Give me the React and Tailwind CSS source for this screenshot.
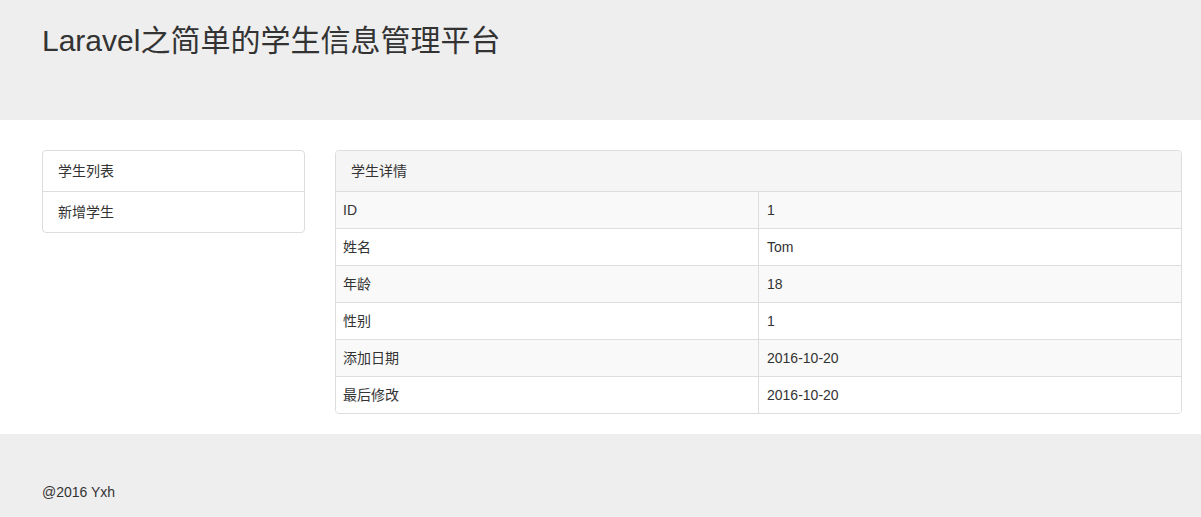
import React from 'react';

const FONT = {fontFamily: '"Liberation Sans", "Noto Sans CJK SC", sans-serif'};

const rows = [
    ['ID', '1'],
    ['姓名', 'Tom'],
    ['年龄', '18'],
    ['性别', '1'],
    ['添加日期', '2016-10-20'],
    ['最后修改', '2016-10-20'],
];

function Sidebar() {
    return <div className="w-[263px] flex-none rounded-[4px] border border-[#ddd] bg-white">
        <div className="px-[15px] py-[10px] leading-[20px] border-b border-[#ddd]">学生列表</div>
        <div className="px-[15px] py-[10px] leading-[20px]">新增学生</div>
    </div>;
}

function DetailPanel() {
    return <div className="w-[847px] flex-none rounded-[4px] border border-[#ddd] bg-white overflow-hidden">
        <div className="px-[15px] py-[10px] leading-[20px] bg-[#f5f5f5] border-b border-[#ddd]">学生详情</div>
        <table className="w-full border-collapse table-fixed">
            <tbody>
            {
                rows.map(([label, value], i) => <tr key={label} className={(i % 2 === 0 ? 'bg-[#f9f9f9]' : 'bg-white') + (i < rows.length - 1 ? ' border-b border-[#ddd]' : '')}>
                    <td className="px-[7px] py-[8px] leading-[20px] border-r border-[#ddd] text-left align-top">{label}</td>
                    <td className="px-[8px] py-[8px] leading-[20px] text-left align-top">{value}</td>
                </tr>)
            }
            </tbody>
        </table>
    </div>;
}

export default function App() {
    return <div className="w-[1201px] min-h-[517px] bg-white text-[14px] text-[#333]" style={FONT}>
        <div className="h-[120px] bg-[#eee] pt-[24px]">
            <h2 className="ml-[42px] text-[30px] leading-[33px] font-normal">Laravel之简单的学生信息管理平台</h2>
        </div>
        <div className="flex gap-[30px] ml-[42px] pt-[30px] pb-[20px] items-start">
            <Sidebar/>
            <DetailPanel/>
        </div>
        <div className="bg-[#eee] h-[83px] pt-[48px]">
            <p className="ml-[42px] leading-[20px]">@2016 Yxh</p>
        </div>
    </div>;
}
